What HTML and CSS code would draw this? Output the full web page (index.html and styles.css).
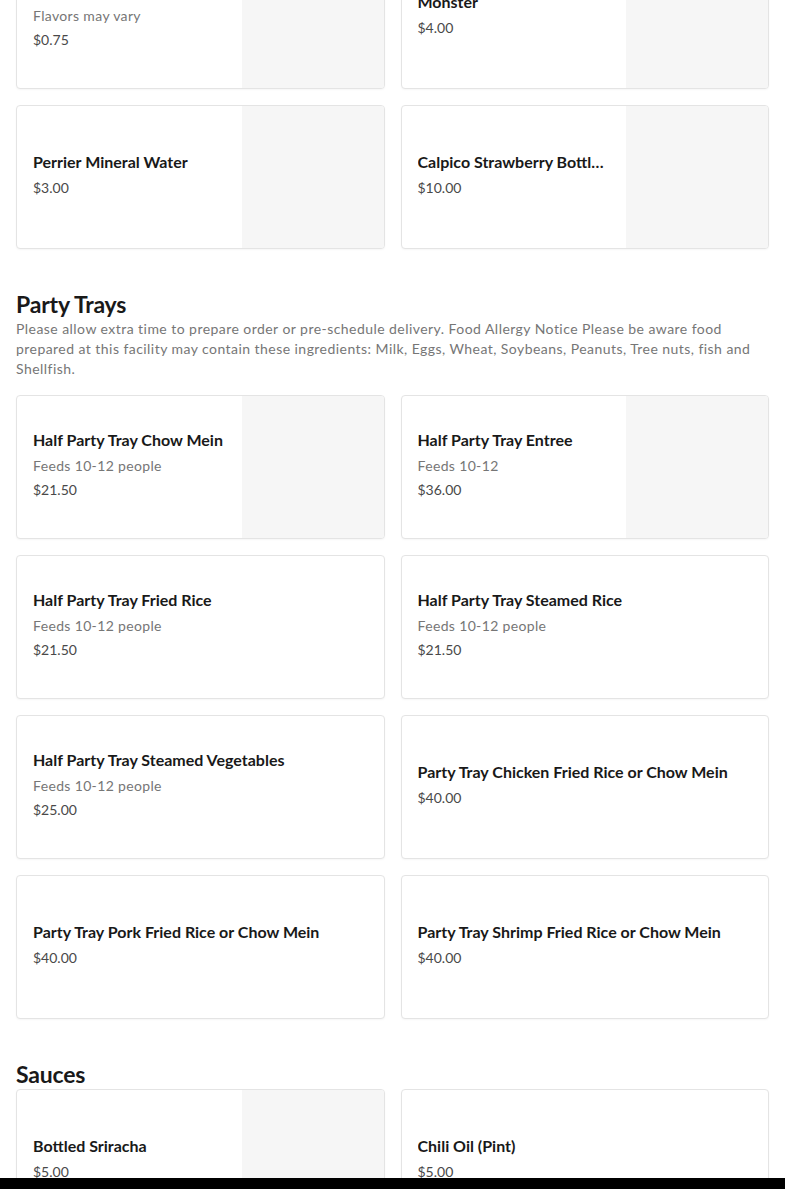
FILE: index.html
```html
<!DOCTYPE html>
<html lang="en">
<head>
<meta charset="utf-8">
<title>Menu</title>
<link rel="stylesheet" href="styles.css">
</head>
<body>
<main class="menu">
  <section class="section section-cut">
    <div class="grid">
      <div class="card">
        <div class="info">
          <div class="name">Canned Soda</div>
          <div class="desc">Flavors may vary</div>
          <div class="price">$0.75</div>
        </div>
        <div class="thumb"></div>
      </div>
      <div class="card">
        <div class="info">
          <div class="name">Monster</div>
          <div class="price">$4.00</div>
        </div>
        <div class="thumb"></div>
      </div>
      <div class="card">
        <div class="info">
          <div class="name">Perrier Mineral Water</div>
          <div class="price">$3.00</div>
        </div>
        <div class="thumb"></div>
      </div>
      <div class="card">
        <div class="info">
          <div class="name">Calpico Strawberry Bottle Drink</div>
          <div class="price">$10.00</div>
        </div>
        <div class="thumb"></div>
      </div>
    </div>
  </section>

  <section class="section">
    <h2 class="section-title">Party Trays</h2>
    <p class="section-desc">Please allow extra time to prepare order or pre-schedule delivery. Food Allergy Notice Please be aware food prepared at this facility may contain these ingredients: Milk, Eggs, Wheat, Soybeans, Peanuts, Tree nuts, fish and Shellfish.</p>
    <div class="grid">
      <div class="card">
        <div class="info">
          <div class="name">Half Party Tray Chow Mein</div>
          <div class="desc">Feeds 10-12 people</div>
          <div class="price">$21.50</div>
        </div>
        <div class="thumb"></div>
      </div>
      <div class="card">
        <div class="info">
          <div class="name">Half Party Tray Entree</div>
          <div class="desc">Feeds 10-12</div>
          <div class="price">$36.00</div>
        </div>
        <div class="thumb"></div>
      </div>
      <div class="card">
        <div class="info">
          <div class="name">Half Party Tray Fried Rice</div>
          <div class="desc">Feeds 10-12 people</div>
          <div class="price">$21.50</div>
        </div>
      </div>
      <div class="card">
        <div class="info">
          <div class="name">Half Party Tray Steamed Rice</div>
          <div class="desc">Feeds 10-12 people</div>
          <div class="price">$21.50</div>
        </div>
      </div>
      <div class="card">
        <div class="info">
          <div class="name">Half Party Tray Steamed Vegetables</div>
          <div class="desc">Feeds 10-12 people</div>
          <div class="price">$25.00</div>
        </div>
      </div>
      <div class="card">
        <div class="info">
          <div class="name">Party Tray Chicken Fried Rice or Chow Mein</div>
          <div class="price">$40.00</div>
        </div>
      </div>
      <div class="card">
        <div class="info">
          <div class="name">Party Tray Pork Fried Rice or Chow Mein</div>
          <div class="price">$40.00</div>
        </div>
      </div>
      <div class="card">
        <div class="info">
          <div class="name">Party Tray Shrimp Fried Rice or Chow Mein</div>
          <div class="price">$40.00</div>
        </div>
      </div>
    </div>
  </section>

  <section class="section">
    <h2 class="section-title">Sauces</h2>
    <div class="grid">
      <div class="card">
        <div class="info">
          <div class="name">Bottled Sriracha</div>
          <div class="price">$5.00</div>
        </div>
        <div class="thumb"></div>
      </div>
      <div class="card">
        <div class="info">
          <div class="name">Chili Oil (Pint)</div>
          <div class="price">$5.00</div>
        </div>
      </div>
    </div>
  </section>
</main>
<div class="bottom-bar"></div>
</body>
</html>
```

FILE: styles.css
```css
* { box-sizing: border-box; }
html, body { margin: 0; padding: 0; background: #ffffff; }
body {
  font-family: "Lato", "Liberation Sans", sans-serif;
  color: #191919;
  overflow: hidden;
  height: 1189px;
}
.menu {
  padding: 0 16px;
  margin-top: -55px;
  display: flex;
  flex-direction: column;
  gap: 41px;
}
.section { display: flex; flex-direction: column; }
.section-title {
  margin: 0;
  font-size: 23px;
  line-height: 29px;
  font-weight: 700;
  letter-spacing: -0.2px;
}
.section-desc {
  margin: 0 0 16px;
  font-size: 14px;
  line-height: 20px;
  color: #767676;
  letter-spacing: 0.45px;
}
.grid {
  display: grid;
  grid-template-columns: 1fr 1fr;
  gap: 16px;
}
.card {
  height: 144px;
  display: flex;
  border: 1px solid #e4e4e4;
  border-radius: 4px;
  box-shadow: 0 1px 2px rgba(0,0,0,0.04);
  overflow: hidden;
  background: #fff;
}
.info {
  flex: 1;
  min-width: 0;
  padding: 0 16px 4px;
  display: flex;
  flex-direction: column;
  justify-content: center;
}
.name {
  font-size: 16px;
  line-height: 20px;
  font-weight: 700;
  color: #191919;
  white-space: nowrap;
  overflow: hidden;
  text-overflow: ellipsis;
  margin-bottom: 6px;
}
.desc {
  font-size: 14px;
  line-height: 20px;
  color: #767676;
  letter-spacing: 0.35px;
  margin-bottom: 4px;
}
.price {
  font-size: 14px;
  line-height: 20px;
  color: #494949;
}
.thumb {
  width: 142px;
  flex: none;
  background: #f6f6f6;
}
.bottom-bar {
  position: fixed;
  left: 0;
  right: 0;
  bottom: 0;
  height: 11px;
  background: #000;
}
```
